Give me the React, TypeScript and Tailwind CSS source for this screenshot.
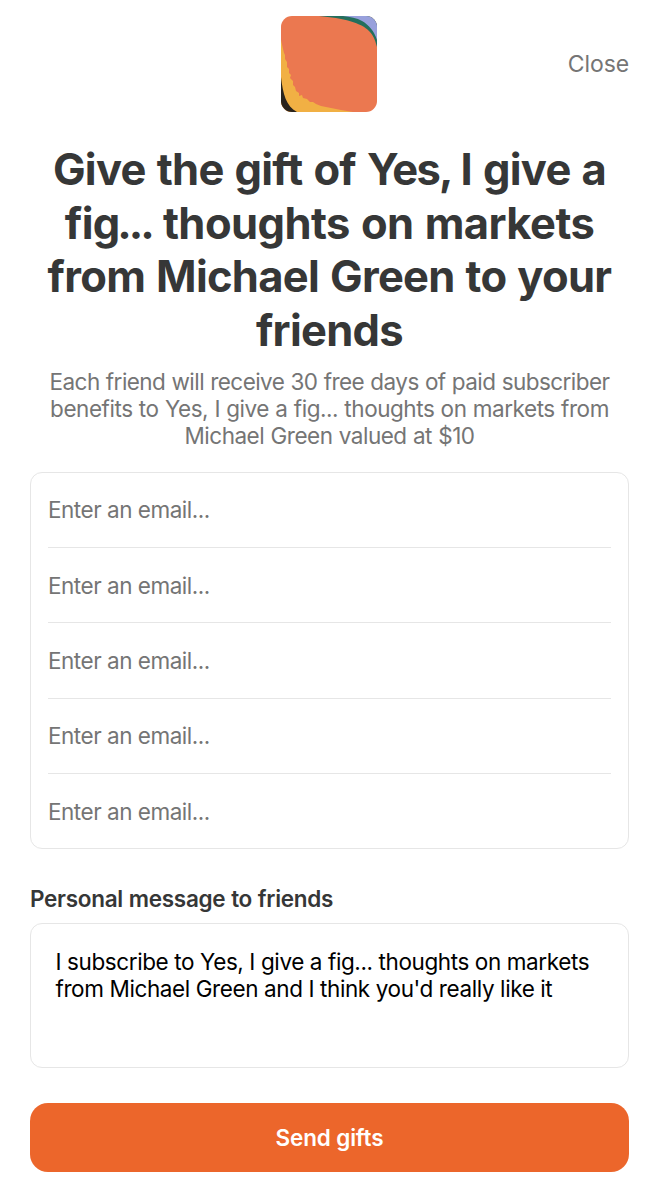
import { useState } from 'react';

const EMAIL_COUNT = 5;

function Logo() {
	return (
		<svg
			viewBox="0 0 96 96"
			className="h-24 w-24 rounded-[11px]"
			role="img"
			aria-label="Publication logo"
		>
			<rect width="96" height="96" fill="#eb7850" />
			{/* top right corner */}
			<path d="M38 0H96V31C94 23 92 19 88 15C81 7 62 2 38 0Z" fill="#246f5d" />
			<path d="M62 0H96V24C93 15 88 9 81 5C76 2 69 1 62 0Z" fill="#98a0dc" />
			{/* bottom left corner */}
			<path
				d="M0 24L2 33L3 37L4 39L4 43L6 46L6 51L8 53L8 57L10 59L9 62L12 65L12 69L14 71L15 75L18 77L18 80L21 79L22 82L26 83L29 86L32 86L35 88L40 90L50 92L60 94L72 96H0Z"
				fill="#f1b044"
			/>
			<path d="M0 61C2 78 5 90 16 96H0Z" fill="#29231d" />
		</svg>
	);
}

export default function App() {
	const [emails, setEmails] = useState<string[]>(Array(EMAIL_COUNT).fill(''));
	const [message, setMessage] = useState(
		"I subscribe to Yes, I give a fig... thoughts on markets from Michael Green and I think you'd really like it",
	);

	const updateEmail = (index: number, value: string) => {
		setEmails(emails.map((email, i) => (i === index ? value : email)));
	};

	return (
		<div className="flex h-[1200px] w-[659px] flex-col bg-white px-[30px] pt-4 font-['Inter',sans-serif] text-[22.500px] tracking-[-0.480px] text-[#757575] [word-spacing:0.400px]">
			<header className="grid grid-cols-3 items-center">
				<div />
				<div className="flex justify-center">
					<Logo />
				</div>
				<button type="button" className="justify-self-end pt-px text-[23px] tracking-[-0.100px]">
					Close
				</button>
			</header>

			<h1 className="mt-[31px] text-center text-[43.500px] leading-[53.700px] font-bold tracking-[-0.700px] text-[#363737] [word-spacing:1.300px]">
				Give the gift of <span className="tracking-[-1.700px]">Yes, </span>I give a
				<br />
				fi<span className="tracking-[-3px]">g...</span>
				<span className="tracking-[-0.550px]"> thoughts on markets</span>
				<br />
				from Michael Green to your
				<br />
				friends
			</h1>
			<p className="mt-[10px] text-center leading-[27px] whitespace-nowrap">
				<span className="tracking-[-0.550px]">
					Each friend will receive 30 free days of paid subscriber
				</span>
				<br />
				<span className="tracking-[-0.450px]">
					benefits to Yes, I give a fig... thoughts on markets from
				</span>
				<br />
				Michael Green valued at $10
			</p>

			<div className="mt-[23px] h-[377px] shrink-0 divide-y divide-[#e6e6e6] rounded-xl border border-[#e6e6e6] px-[17px]">
				{emails.map((email, i) => (
					<input
						key={i}
						type="email"
						value={email}
						placeholder="Enter an email..."
						onChange={(e) => updateEmail(i, e.target.value)}
						className="block h-[75.300px] w-full outline-none placeholder:text-[#757575]"
					/>
				))}
			</div>

			<label
				htmlFor="message"
				className="mt-[36px] leading-[28px] font-semibold tracking-[-0.280px] text-[#363737]"
			>
				Personal message to friends
			</label>
			<textarea
				id="message"
				value={message}
				onChange={(e) => setMessage(e.target.value)}
				className="mt-[10px] h-[145px] shrink-0 resize-none overflow-hidden rounded-xl border border-[#e6e6e6] pr-[20px] pl-[24.500px] pt-[24px] leading-[27px] tracking-[-0.400px] text-black outline-none"
			/>

			<button
				type="button"
				className="mt-[35px] h-[69px] shrink-0 rounded-[18px] bg-[#ec662b] pt-px font-semibold tracking-[-0.150px] text-white"
			>
				Send gifts
			</button>
		</div>
	);
}
